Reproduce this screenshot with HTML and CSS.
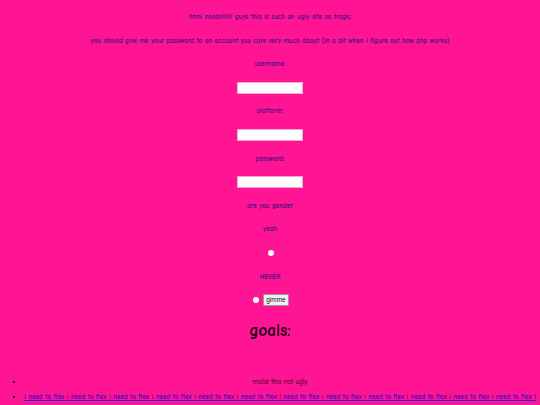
FILE: index.html
```html
<!DOCTYPE html>
<html>
<head>
<meta charset="utf-8">
<title>html noob</title>
<link rel="stylesheet" href="styles.css">
</head>
<body>
<main class="page">
  <form class="form">
    <p class="row">html noob!!!!!!! guys this is such an ugly site so tragic</p>
    <p class="row">you should give me your password to an account you care very much about (in a bit when i figure out how php works)</p>
    <label class="row" for="u">username:</label>
    <div class="row"><input class="field" id="u" type="text"></div>
    <label class="row" for="pl">platform:</label>
    <div class="row"><input class="field" id="pl" type="text"></div>
    <label class="row" for="pw">password:</label>
    <div class="row"><input class="field" id="pw" type="password"></div>
    <p class="row">are you gender</p>
    <label class="row" for="r1">yeah</label>
    <div class="row"><input class="radio" id="r1" type="radio" name="g"></div>
    <label class="row" for="r2">NEVER</label>
    <div class="row"><input class="radio" id="r2" type="radio" name="g"><button class="btn" type="button">gimme</button></div>
  </form>
  <h1 class="goals">goals:</h1>
  <ul class="list">
    <li class="item item-plain">make this not ugly</li>
    <li class="item item-link"><a class="link" href="#">i need to flex i need to flex i need to flex i need to flex i need to flex i need to flex i need to flex i need to flex i need to flex i need to flex i need to flex i need to flex i need to flex i need to flex i need to flex i need to flex</a></li>
  </ul>
</main>
</body>
</html>
```
FILE: styles.css
```css
html, body {
  margin: 0;
  padding: 0;
  background: #ff1493;
}
body {
  font-family: "Comic Sans MS", "Comic Neue", "Liberation Sans", sans-serif;
  font-size: 7px;
  font-weight: bold;
  color: #4a0e86;
  text-align: center;
  overflow: hidden;
  height: 405px;
}
.page {
  padding: 11px 4px 0;
}
.form {
  display: flex;
  flex-direction: column;
  align-items: center;
  gap: 11.6px;
  margin: 0;
}
.row {
  display: flex;
  align-items: center;
  justify-content: center;
  height: 12px;
  line-height: 12px;
  margin: 0;
}
.field {
  box-sizing: border-box;
  width: 66px;
  height: 12px;
  margin: 0;
  padding: 0;
  border: 1px solid #f6a6d0;
  background: #ffffff;
}
.radio {
  appearance: none;
  -webkit-appearance: none;
  width: 6px;
  height: 6px;
  margin: 0 0 0 2px;
  border: none;
  border-radius: 50%;
  background: #ffffff;
}
.btn {
  margin-left: 4px;
  height: 12px;
  padding: 0 2px;
  font-family: "Liberation Sans", sans-serif;
  font-size: 6.5px;
  font-weight: normal;
  color: #222;
  background: #efefef;
  border: 1px solid #9a9a9a;
  border-radius: 1px;
  line-height: 10px;
}
.goals {
  margin: 16px 0 0;
  height: 18px;
  line-height: 18px;
  font-size: 17px;
  font-weight: bold;
  color: #1a0010;
}
.list {
  margin: 35px 0 0;
  padding-left: 20px;
  list-style: disc;
}
.item {
  line-height: 15px;
  color: #1a0010;
  font-weight: normal;
}
.item-link {
  text-align: left;
}
.item::marker {
  color: #1a0010;
}
.link {
  color: #3412c8;
  font-weight: bold;
  text-decoration: underline;
}
```
